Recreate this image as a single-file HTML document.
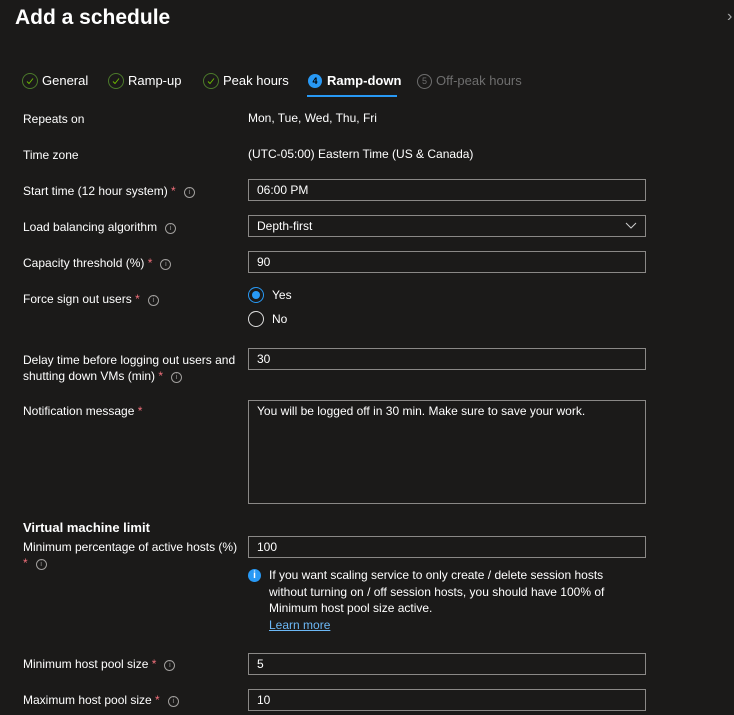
<!DOCTYPE html>
<html><head><style>
body{margin:0;width:734px;height:715px;background:#1b1a19;font-family:"Liberation Sans",sans-serif;color:#fff;font-size:12px;position:relative;overflow:hidden}
.a{position:absolute;white-space:nowrap}
.in{position:absolute;left:248px;width:396px;height:20px;border:1px solid #8a8886;box-sizing:content-box}
.in span{position:absolute;left:8px;top:3px}
.r{color:#f1707b}
.i{display:inline-block;width:9px;height:9px;border:1px solid #a19f9d;border-radius:50%;font-size:7px;line-height:9px;text-align:center;color:#a19f9d;vertical-align:1px;margin-left:8px}
.ck{display:inline-block;width:14px;height:14px;border:1px solid #6bb700;border-radius:50%;vertical-align:-4px;margin-right:4px;position:relative;border-color:#4c7a2b}
.tab{position:absolute;top:73px;font-size:13px}
</style></head><body>
<div class="a" style="left:15px;top:6px;font-size:21px;font-weight:bold">Add a schedule</div>
<div class="a" style="left:727px;top:8px;color:#aaa;font-size:16px">›</div>
<div class="tab" style="left:22px"><span class="ck"><svg width="14" height="14" style="position:absolute;left:0;top:0"><path d="M4 7.5l2 2 4-5" stroke="#6bb700" fill="none" stroke-width="1"/></svg></span>General</div>
<div class="tab" style="left:108px"><span class="ck"><svg width="14" height="14" style="position:absolute;left:0;top:0"><path d="M4 7.5l2 2 4-5" stroke="#6bb700" fill="none" stroke-width="1"/></svg></span>Ramp-up</div>
<div class="tab" style="left:203px"><span class="ck"><svg width="14" height="14" style="position:absolute;left:0;top:0"><path d="M4 7.5l2 2 4-5" stroke="#6bb700" fill="none" stroke-width="1"/></svg></span>Peak hours</div>
<div class="tab" style="left:308px;font-weight:bold"><span style="display:inline-block;width:14px;height:14px;border-radius:50%;background:#2899f5;color:#000;font-size:9px;text-align:center;line-height:14px;vertical-align:1px;margin-right:5px">4</span>Ramp-down</div>
<div style="position:absolute;left:307px;top:95px;width:90px;height:2px;background:#2899f5"></div>
<div class="tab" style="left:417px;color:#6e6e6e"><span style="display:inline-block;width:13px;height:13px;border-radius:50%;border:1px solid #6e6e6e;font-size:9px;text-align:center;line-height:13px;vertical-align:1px;margin-right:4px">5</span>Off-peak hours</div>

<div class="a" style="left:23px;top:112px">Repeats on</div>
<div class="a" style="left:248px;top:111px">Mon, Tue, Wed, Thu, Fri</div>
<div class="a" style="left:23px;top:148px">Time zone</div>
<div class="a" style="left:248px;top:147px">(UTC-05:00) Eastern Time (US &amp; Canada)</div>

<div class="a" style="left:23px;top:184px">Start time (12 hour system) <span class="r">*</span><span class="i">i</span></div>
<div class="in" style="top:179px"><span>06:00 PM</span></div>
<div class="a" style="left:23px;top:220px">Load balancing algorithm<span class="i">i</span></div>
<div class="in" style="top:215px"><span>Depth-first</span><svg style="position:absolute;right:8px;top:6px" width="12" height="8"><path d="M1 1l5 5 5-5" stroke="#ccc" fill="none"/></svg></div>
<div class="a" style="left:23px;top:256px">Capacity threshold (%) <span class="r">*</span><span class="i">i</span></div>
<div class="in" style="top:251px"><span>90</span></div>
<div class="a" style="left:23px;top:292px">Force sign out users <span class="r">*</span><span class="i">i</span></div>
<div class="a" style="left:248px;top:287px"><span style="display:inline-block;width:14px;height:14px;border:1px solid #2899f5;border-radius:50%;vertical-align:-4px;margin-right:8px;position:relative"><span style="position:absolute;left:3px;top:3px;width:8px;height:8px;border-radius:50%;background:#2899f5"></span></span>Yes</div>
<div class="a" style="left:248px;top:311px"><span style="display:inline-block;width:14px;height:14px;border:1px solid #ddd;border-radius:50%;vertical-align:-4px;margin-right:8px"></span>No</div>
<div class="a" style="left:23px;top:352px;line-height:16px">Delay time before logging out users and<br>shutting down VMs (min) <span class="r">*</span><span class="i">i</span></div>
<div class="in" style="top:348px"><span>30</span></div>
<div class="a" style="left:23px;top:404px">Notification message <span class="r">*</span></div>
<div class="in" style="top:400px;height:102px"><span>You will be logged off in 30 min. Make sure to save your work.</span></div>

<div class="a" style="left:23px;top:520px;font-weight:bold;font-size:13px">Virtual machine limit</div>
<div class="a" style="left:23px;top:539px;line-height:16px">Minimum percentage of active hosts (%)<br><span class="r">*</span><span class="i">i</span></div>
<div class="in" style="top:536px"><span>100</span></div>
<div class="a" style="left:248px;top:567px"><span style="display:inline-block;width:13px;height:13px;border-radius:50%;background:#2899f5;color:#fff;font-size:10px;font-weight:bold;text-align:center;line-height:13px">i</span></div>
<div class="a" style="left:269px;top:567px;line-height:16.5px">If you want scaling service to only create / delete session hosts<br>without turning on / off session hosts, you should have 100% of<br>Minimum host pool size active.<br><span style="color:#6cb8f6;text-decoration:underline">Learn more</span></div>
<div class="a" style="left:23px;top:657px">Minimum host pool size <span class="r">*</span><span class="i">i</span></div>
<div class="in" style="top:653px"><span>5</span></div>
<div class="a" style="left:23px;top:693px">Maximum host pool size <span class="r">*</span><span class="i">i</span></div>
<div class="in" style="top:689px"><span>10</span></div>
</body></html>
